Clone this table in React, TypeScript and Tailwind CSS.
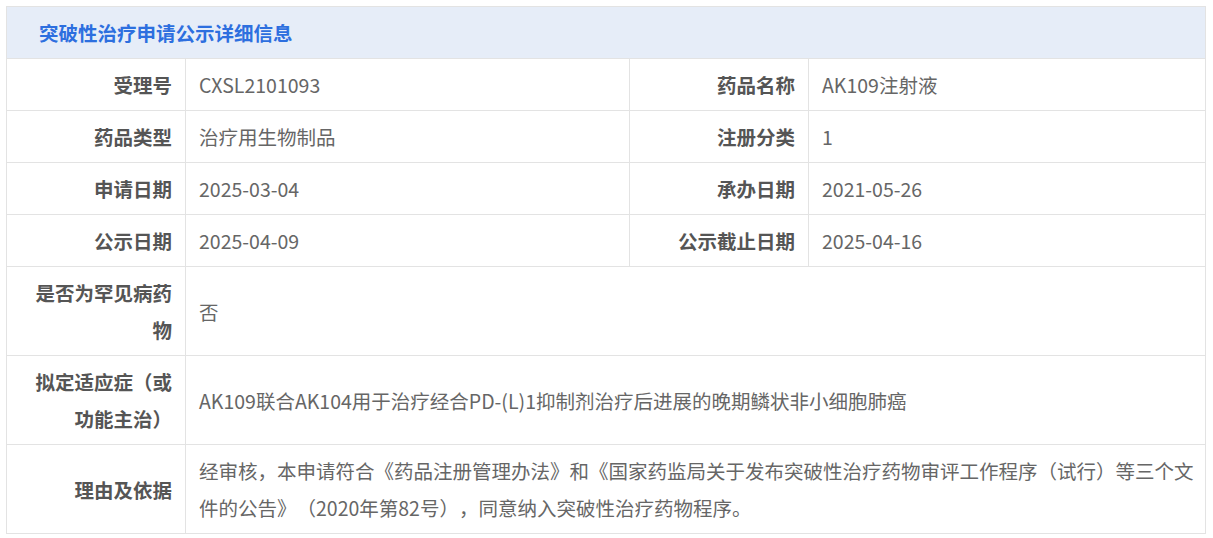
import React from 'react';

const font = { fontFamily: '"Noto Sans CJK SC", "Noto Sans", sans-serif' };

type Row = { label: string; value: string; label2?: string; value2?: string };

const rows: Row[] = [
  { label: '受理号', value: 'CXSL2101093', label2: '药品名称', value2: 'AK109注射液' },
  { label: '药品类型', value: '治疗用生物制品', label2: '注册分类', value2: '1' },
  { label: '申请日期', value: '2025-03-04', label2: '承办日期', value2: '2021-05-26' },
  { label: '公示日期', value: '2025-04-09', label2: '公示截止日期', value2: '2025-04-16' },
  { label: '是否为罕见病药物', value: '否' },
  { label: '拟定适应症（或功能主治）', value: 'AK109联合AK104用于治疗经合PD-(L)1抑制剂治疗后进展的晚期鳞状非小细胞肺癌' },
  {
    label: '理由及依据',
    value:
      '经审核，本申请符合《药品注册管理办法》和《国家药监局关于发布突破性治疗药物审评工作程序（试行）等三个文件的公告》（2020年第82号），同意纳入突破性治疗药物程序。',
  },
];

const labelCls =
  'flex items-center justify-end text-right border-r border-b border-[#e3e3e3] pl-[20px] pr-[13px] py-[7px] leading-[37px] font-bold text-[#555555]';
const valueCls =
  'flex items-center border-r border-b border-[#e3e3e3] pl-[13px] pr-[4px] py-[7px] leading-[37px] text-[#666666]';

export default function App() {
  return (
    <div className="bg-white min-h-[538px] p-[6px] text-[19.5px] [text-spacing-trim:space-all]" style={font}>
      <div className="w-[1200px] border-l border-t border-[#e3e3e3]">
        <div className="h-[52px] flex items-center pl-[32px] bg-[#e6edf8] border-r border-b border-[#e3e3e3] font-bold text-[#2d6fdf]">
          突破性治疗申请公示详细信息
        </div>
        <div className="grid grid-cols-[179px_444px_179px_397px]">
          {rows.map((row, i) =>
            row.label2 ? (
              <React.Fragment key={i}>
                <div className={labelCls}>{row.label}</div>
                <div className={valueCls}>{row.value}</div>
                <div className={labelCls}>{row.label2}</div>
                <div className={valueCls}>{row.value2}</div>
              </React.Fragment>
            ) : (
              <React.Fragment key={i}>
                <div className={labelCls}>{row.label}</div>
                <div className={`${valueCls} col-span-3`}>{row.value}</div>
              </React.Fragment>
            )
          )}
        </div>
      </div>
    </div>
  );
}
